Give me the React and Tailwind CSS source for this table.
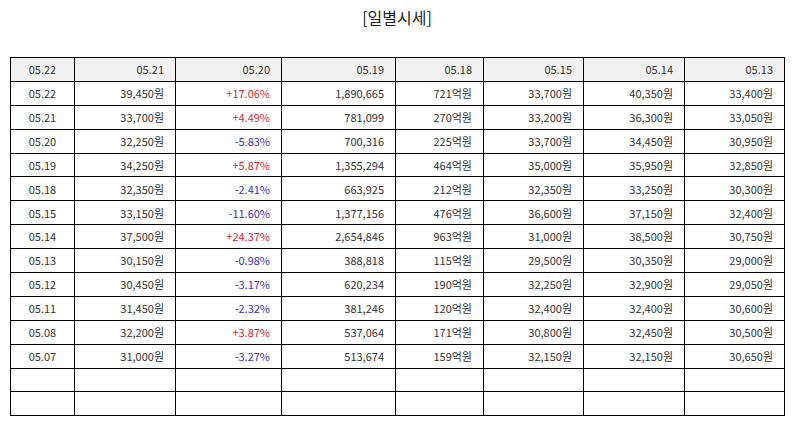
const headers = ["05.22", "05.21", "05.20", "05.19", "05.18", "05.15", "05.14", "05.13"];

const rows = [
  ["05.22", "39,450원", "+17.06%", "1,890,665", "721억원", "33,700원", "40,350원", "33,400원"],
  ["05.21", "33,700원", "+4.49%", "781,099", "270억원", "33,200원", "36,300원", "33,050원"],
  ["05.20", "32,250원", "-5.83%", "700,316", "225억원", "33,700원", "34,450원", "30,950원"],
  ["05.19", "34,250원", "+5.87%", "1,355,294", "464억원", "35,000원", "35,950원", "32,850원"],
  ["05.18", "32,350원", "-2.41%", "663,925", "212억원", "32,350원", "33,250원", "30,300원"],
  ["05.15", "33,150원", "-11.60%", "1,377,156", "476억원", "36,600원", "37,150원", "32,400원"],
  ["05.14", "37,500원", "+24.37%", "2,654,846", "963억원", "31,000원", "38,500원", "30,750원"],
  ["05.13", "30,150원", "-0.98%", "388,818", "115억원", "29,500원", "30,350원", "29,000원"],
  ["05.12", "30,450원", "-3.17%", "620,234", "190억원", "32,250원", "32,900원", "29,050원"],
  ["05.11", "31,450원", "-2.32%", "381,246", "120억원", "32,400원", "32,400원", "30,600원"],
  ["05.08", "32,200원", "+3.87%", "537,064", "171억원", "30,800원", "32,450원", "30,500원"],
  ["05.07", "31,000원", "-3.27%", "513,674", "159억원", "32,150원", "32,150원", "30,650원"],
  ["", "", "", "", "", "", "", ""],
  ["", "", "", "", "", "", "", ""],
];

const colWidths = ["w-[64px]", "w-[101px]", "w-[106px]", "w-[114px]", "w-[88px]", "w-[100px]", "w-[101px]", "w-[100px]"];

function cellClass(i) {
  return i === 0
    ? "border border-black text-center px-2"
    : "border border-black text-right pr-[11px] pl-2";
}

function changeColor(v) {
  if (v.startsWith("+")) return "text-[#dc2a38]";
  if (v.startsWith("-")) return "text-[#3434c4]";
  return "";
}

export default function App() {
  return (
    <div
      className="w-[794px] h-[425px] bg-white text-[#333] px-[10px]"
      style={{ fontFamily: '"Noto Sans CJK KR", "Noto Sans", sans-serif' }}
    >
      <h2 className="pt-[6px] h-[57px] text-center text-[16px] leading-[22px] text-[#222]">
        [일별시세]
      </h2>
      <table className="w-[774px] table-fixed border-collapse text-[11px]">
        <colgroup>
          {colWidths.map((w, i) => (
            <col key={i} className={w} />
          ))}
        </colgroup>
        <thead>
          <tr className="h-[23.9px] bg-[#f2f2f2]">
            {headers.map((h, i) => (
              <th key={i} className={`${cellClass(i)} font-normal`}>
                {h}
              </th>
            ))}
          </tr>
        </thead>
        <tbody>
          {rows.map((r, ri) => (
            <tr key={ri} className="h-[23.9px]">
              {r.map((v, i) => (
                <td key={i} className={`${cellClass(i)} ${i === 2 ? changeColor(v) : ""}`}>
                  {v}
                </td>
              ))}
            </tr>
          ))}
        </tbody>
      </table>
    </div>
  );
}
